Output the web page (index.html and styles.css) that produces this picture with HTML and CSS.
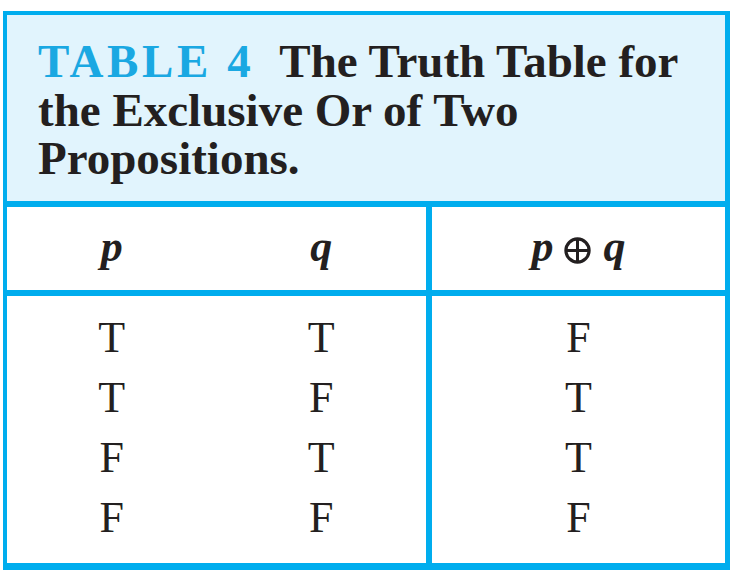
FILE: index.html
```html
<!DOCTYPE html>
<html>
<head>
<meta charset="utf-8">
<link rel="stylesheet" href="styles.css">
</head>
<body>
<div class="truth">
  <div class="caption">
    <div class="line"><span class="label">TABLE 4</span><span class="title">The Truth Table for</span></div>
    <div class="line">the Exclusive Or of Two</div>
    <div class="line">Propositions.</div>
  </div>
  <div class="grid">
    <div class="head">p</div>
    <div class="head">q</div>
    <div class="head sep">p<svg class="oplus" width="27" height="27" viewBox="0 0 27 27"><circle cx="13.5" cy="13.5" r="11.6" fill="none" stroke="#231f20" stroke-width="3.2"/><line x1="13.5" y1="1.5" x2="13.5" y2="25.5" stroke="#231f20" stroke-width="3"/><line x1="1.5" y1="13.5" x2="25.5" y2="13.5" stroke="#231f20" stroke-width="3"/></svg>q</div>
    <div class="col">
      <div>T</div><div>T</div><div>F</div><div>F</div>
    </div>
    <div class="col">
      <div>T</div><div>F</div><div>T</div><div>F</div>
    </div>
    <div class="col sep">
      <div>F</div><div>T</div><div>T</div><div>F</div>
    </div>
  </div>
</div>
</body>
</html>
```
FILE: styles.css
```css
html, body {
  margin: 0;
  padding: 0;
  background: #ffffff;
}
.truth {
  margin: 11px 0 0 3px;
  width: 727px;
  height: 559px;
  box-sizing: border-box;
  border-style: solid;
  border-color: #00adee;
  border-width: 4px 5px 7px 4px;
  display: flex;
  flex-direction: column;
}
.caption {
  background: #e1f4fd;
  border-bottom: 6px solid #00adee;
  box-sizing: border-box;
  height: 192px;
  padding: 22px 20px 0 31px;
  font-family: "Liberation Serif", "Times New Roman", serif;
  font-weight: bold;
  font-size: 47px;
  line-height: 48.5px;
  color: #231f20;
}
.line {
  white-space: nowrap;
}
.label {
  color: #1aa8e2;
  letter-spacing: 3.6px;
  margin-right: 25px;
}
.grid {
  flex: 1;
  display: grid;
  grid-template-columns: 209.5px 209.5px 1fr;
  grid-template-rows: 89px 1fr;
  font-family: "Liberation Serif", "Times New Roman", serif;
  color: #231f20;
}
.head {
  border-bottom: 6px solid #00adee;
  display: flex;
  justify-content: center;
  align-items: flex-start;
  font-style: italic;
  font-weight: bold;
  font-size: 44px;
  line-height: 80px;
}
.sep {
  border-left: 6px solid #00adee;
}
.oplus {
  margin: 30px 13px 0 10px;
}
.col {
  padding-top: 12px;
  display: flex;
  flex-direction: column;
  align-items: center;
  font-size: 44px;
  line-height: 60px;
}
```
